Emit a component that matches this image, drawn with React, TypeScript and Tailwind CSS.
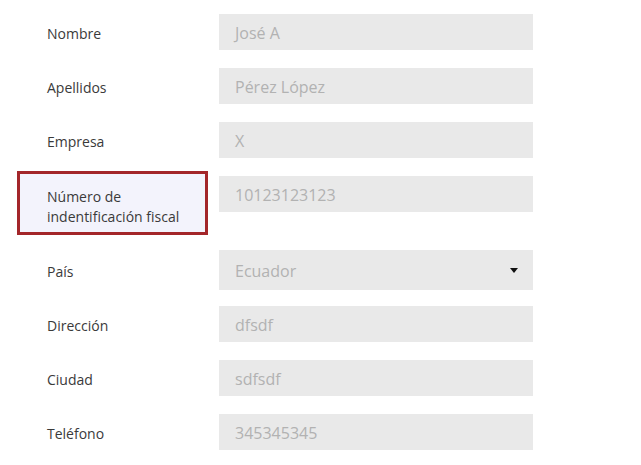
import React from "react";

const font = { fontFamily: '"Open Sans", "Lato", sans-serif' };

function Input({ value, select }: { value: string; select?: boolean }) {
  return (
    <div
      className={`ml-[11px] flex w-[314px] items-center bg-[#e9e9e9] pl-4 pr-[15px] text-[16px] text-[#b2b2b2] ${
        select ? "h-10" : "h-9"
      }`}
    >
      <span className="flex-1 pt-[1px]">{value}</span>
      {select && (
        <svg width="8" height="5" viewBox="0 0 8 5">
          <path d="M0 0 H8 L4 5 Z" fill="#111" />
        </svg>
      )}
    </div>
  );
}

function Row({ label, value, className = "", select }: { label: string; value: string; className?: string; select?: boolean }) {
  return (
    <div className={`flex items-center ${className}`}>
      <div className="ml-[17px] w-[191px] pl-[30px] pt-[3px] text-[14px] text-[#3a3a3a]">{label}</div>
      <Input value={value} select={select} />
    </div>
  );
}

export default function App() {
  return (
    <div className="h-[465px] w-[641px] bg-white" style={font}>
      <div className="flex flex-col pt-[14px]">
        <Row label="Nombre" value="José A" />
        <Row label="Apellidos" value="Pérez López" className="mt-[18px]" />
        <Row label="Empresa" value="X" className="mt-[18px]" />
        <div className="mt-[13px] flex items-start">
          <div className="ml-[17px] h-16 w-[191px] border-[3px] border-[#a3262a] bg-[#f3f3fc] pl-[27px] pt-[13px] text-[14px] leading-5 text-[#3a3a3a]">
            Número de
            <br />
            indentificación fiscal
          </div>
          <div className="mt-[5px]">
            <Input value="10123123123" />
          </div>
        </div>
        <Row label="País" value="Ecuador" select className="mt-[15px]" />
        <Row label="Dirección" value="dfsdf" className="mt-4" />
        <Row label="Ciudad" value="sdfsdf" className="mt-[18px]" />
        <Row label="Teléfono" value="345345345" className="mt-[18px]" />
      </div>
    </div>
  );
}
